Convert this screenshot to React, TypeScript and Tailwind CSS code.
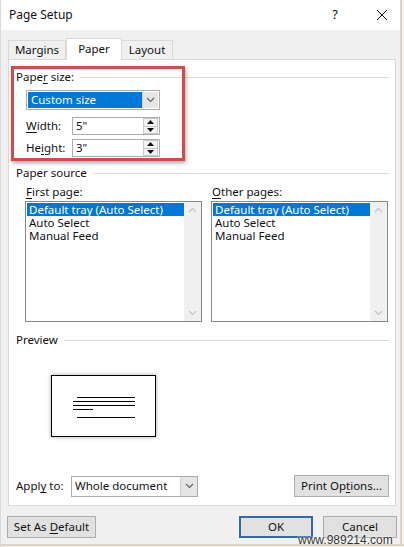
import React from 'react';

// Page Setup dialog, Paper tab

function GroupHeader({ children }: { children: React.ReactNode }) {
  return (
    <div className="flex items-center h-[14px] leading-[14px]">
      <span>{children}</span>
      <div className="ml-[6px] flex-1 h-px bg-[#dcdcdc]" />
    </div>
  );
}

function Chevron({ up = false, color = '#606060' }: { up?: boolean; color?: string }) {
  return (
    <svg width="9" height="6" viewBox="0 0 9 6">
      <path d={up ? 'M1 5 L4.5 1.5 L8 5' : 'M1 1 L4.5 4.5 L8 1'} fill="none" stroke={color} strokeWidth="1.1" />
    </svg>
  );
}

function Spinner() {
  return (
    <div className="flex flex-col w-[15px] h-[16px] border border-[#c8c8c8] bg-[#f3f3f3]">
      <div className="flex-1 flex items-center justify-center border-b border-[#c8c8c8]">
        <svg width="7" height="4" viewBox="0 0 7 4"><path d="M0 4 L3.5 0 L7 4 Z" fill="#111" /></svg>
      </div>
      <div className="flex-1 flex items-center justify-center">
        <svg width="7" height="4" viewBox="0 0 7 4"><path d="M0 0 L3.5 4 L7 0 Z" fill="#111" /></svg>
      </div>
    </div>
  );
}

function NumberField({ label, accessIdx, value }: { label: string; accessIdx: number; value: string }) {
  return (
    <div className="flex items-center h-[18px]">
      <div className="w-[46px]">
        {label.slice(0, accessIdx)}
        <span className="underline underline-offset-2">{label[accessIdx]}</span>
        {label.slice(accessIdx + 1)}
      </div>
      <div className="w-[88px] h-[18px] border border-[#abadb3] bg-white flex items-center justify-between pl-[3px] pr-[1px]">
        <span>{value}</span>
        <Spinner />
      </div>
    </div>
  );
}

function ListBox() {
  const items = ['Default tray (Auto Select)', 'Auto Select', 'Manual Feed'];
  return (
    <div className="w-[177px] h-[121px] border border-[#828790] bg-white flex">
      <div className="flex-1 pt-[1px] pl-[1px]">
        {items.map((it, i) => (
          <div
            key={it}
            className={
              i === 0
                ? 'h-[13px] leading-[13px] bg-[#0078d7] text-white pl-[2px]'
                : 'h-[13px] leading-[13px] pl-[2px]'
            }
          >
            {it}
          </div>
        ))}
      </div>
      <div className="w-[17px] bg-[#f0f0f0] flex flex-col justify-between items-center py-[5px]">
        <Chevron up color="#c2c2c2" />
        <Chevron color="#c2c2c2" />
      </div>
    </div>
  );
}

function Button({ children, className = '' }: { children: React.ReactNode; className?: string }) {
  return (
    <div className={'h-[22px] bg-[#e1e1e1] border border-[#adadad] flex items-center justify-center ' + className}>
      {children}
    </div>
  );
}

export default function App() {
  return (
    <div className="relative w-[404px] h-[547px] bg-[#f0f0f0] text-[11.5px] text-[#111] font-['Noto_Sans',sans-serif] overflow-hidden border-l border-[#dadada]">
      {/* title bar */}
      <div className="h-[30px] bg-white flex items-center pl-[8px] pr-[16px] text-[12px]">
        <span className="flex-1">Page Setup</span>
        <span className="mr-[38px] text-[13px]">?</span>
        <svg width="12" height="12" viewBox="0 0 12 12">
          <path d="M1 1 L11 11 M11 1 L1 11" stroke="#111" strokeWidth="1" />
        </svg>
      </div>

      {/* tabs */}
      <div className="mt-[8px] pl-[7px] flex items-end h-[21px]">
        <div className="w-[58px] h-[19px] border border-b-0 border-[#d9d9d9] flex items-center justify-center">Margins</div>
        <div className="relative z-10 -mb-px w-[56px] h-[22px] bg-white border border-b-0 border-[#d9d9d9] flex items-center justify-center pb-[2px]">Paper</div>
        <div className="w-[51px] h-[19px] border border-b-0 border-l-0 border-[#d9d9d9] flex items-center justify-center">Layout</div>
      </div>

      {/* panel */}
      <div className="ml-[7px] w-[388px] h-[447px] bg-white border border-[#d9d9d9] pl-[7px] pr-[6px]">
        <div className="mt-[10px]">
          <GroupHeader>
            Pape<span className="underline underline-offset-2">r</span> size:
          </GroupHeader>
        </div>
        <div className="pl-[10px]">
          <div className="mt-[6px] w-[134px] h-[20px] border border-[#acacac] bg-white flex p-px">
            <div className="flex-1 bg-[#0078d7] text-white flex items-center pl-[3px]">Custom size</div>
            <div className="w-[16px] bg-[#e5e5e5] border-l border-[#cfcfcf] flex items-center justify-center">
              <Chevron />
            </div>
          </div>
          <div className="mt-[7px]">
            <NumberField label="Width:" accessIdx={0} value={'5"'} />
          </div>
          <div className="mt-[4px]">
            <NumberField label="Height:" accessIdx={2} value={'3"'} />
          </div>
        </div>

        <div className="mt-[9px]">
          <GroupHeader>Paper source</GroupHeader>
        </div>
        <div className="mt-[5px] pl-[9px] flex gap-[9px]">
          <div>
            <div className="h-[14px] leading-[14px] pl-[1px]">
              <span className="underline underline-offset-2">F</span>irst page:
            </div>
            <div className="mt-[2px]">
              <ListBox />
            </div>
          </div>
          <div>
            <div className="h-[14px] leading-[14px] pl-[1px]">
              <span className="underline underline-offset-2">O</span>ther pages:
            </div>
            <div className="mt-[2px]">
              <ListBox />
            </div>
          </div>
        </div>

        <div className="mt-[11px]">
          <GroupHeader>Preview</GroupHeader>
        </div>
        <div className="mt-[28px] ml-[35px] w-[105px] h-[62px] border border-black bg-white shadow-[0_0_4px_rgba(0,0,0,0.35)]">
          <svg width="103" height="60" viewBox="0 0 103 60">
            <path d="M25 21.5 H83 M21 25.5 H83 M21 29.5 H83 M21 33.5 H41 M25 41.5 H83" stroke="#000" strokeWidth="1" />
          </svg>
        </div>

        <div className="mt-[38px] flex items-center">
          <span className="w-[55px]">
            Appl<span className="underline underline-offset-2">y</span> to:
          </span>
          <div className="w-[127px] h-[21px] border border-[#acacac] bg-white flex">
            <div className="flex-1 flex items-center pl-[3px]">Whole document</div>
            <div className="w-[17px] bg-[#e5e5e5] border-l border-[#cfcfcf] flex items-center justify-center">
              <Chevron />
            </div>
          </div>
          <div className="flex-1" />
          <Button className="w-[95px]">
            Print Op<span className="underline underline-offset-2">t</span>ions...
          </Button>
        </div>
      </div>

      {/* bottom buttons */}
      <div className="mt-[10px] pl-[6px] flex">
        <Button className="w-[89px]">
          Set As&nbsp;<span className="underline underline-offset-2">D</span>efault
        </Button>
        <div className="flex-1" />
        <div className="w-[74px] h-[22px] bg-[#e1e1e1] border-2 border-[#2f6aa5] flex items-center justify-center">OK</div>
        <Button className="ml-[10px] mr-[7px] w-[74px]">Cancel</Button>
      </div>

      {/* red annotation box */}
      <div className="absolute left-[10px] top-[66px] w-[174px] h-[95px] border-[3px] border-[#d24b4b] shadow-[1px_2px_4px_rgba(0,0,0,0.35)]" />

      {/* watermark */}
      <div className="absolute left-[297px] top-[531px] text-[12px] text-[#333] font-['Liberation_Sans',sans-serif] [text-shadow:0_0_2px_#fff,0_0_2px_#fff]">
        www.989214.com
      </div>

      {/* window frame */}
      <div className="absolute right-0 top-0 w-[4px] h-full bg-[#f0f0f0] border-l-2 border-[#ddd3c0]" />
      <div className="absolute left-0 bottom-0 w-full h-[3px] bg-[#f0f0f0] border-t-2 border-[#ddd3c0]" />
    </div>
  );
}
